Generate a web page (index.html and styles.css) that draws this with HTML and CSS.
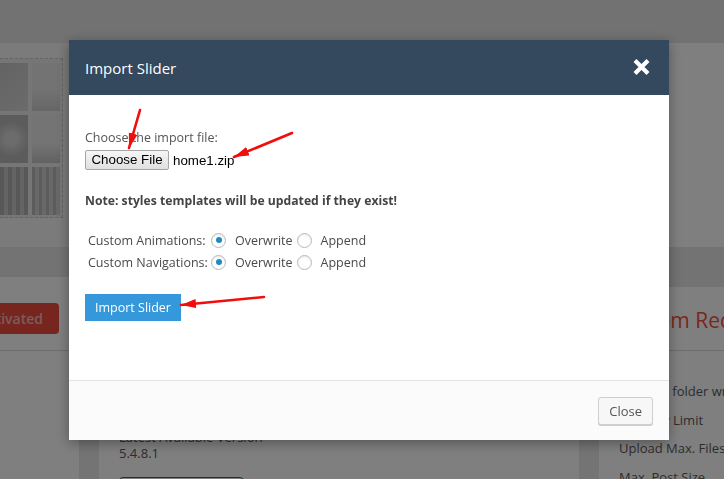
FILE: index.html
```html
<!DOCTYPE html>
<html lang="en">
<head>
    <meta charset="UTF-8">
    <meta name="viewport" content="width=device-width, initial-scale=1.0">
    <title>Import Slider</title>
    <link rel="stylesheet" href="styles.css">
</head>
<body>
    <div class="page">
        <div class="topbar"></div>
        <div class="hero">
            <div class="preview">
                <div class="preview-frame">
                    <span class="thumb thumb-a"></span>
                    <span class="thumb thumb-b"></span>
                    <span class="thumb thumb-c"></span>
                    <span class="thumb thumb-d"></span>
                    <span class="thumb thumb-e"></span>
                    <span class="thumb thumb-f"></span>
                </div>
            </div>
        </div>
        <div class="band">
            <div class="band-left">
                <div class="strip"></div>
                <div class="activation"><span class="btn-activated">Not Activated</span></div>
            </div>
            <div class="band-right">
                <div class="strip strip-tall"></div>
                <h2 class="req-title">System Requirements</h2>
            </div>
        </div>
        <div class="cards">
            <div class="gutter-space"></div>
            <div class="gutter"></div>
            <div class="card card-version">
                <p>Installed Version</p>
                <p>5.4.8</p>
                <p class="spaced">Latest Available Version</p>
                <p>5.4.8.1</p>
                <span class="btn-outline"></span>
            </div>
            <div class="gutter"></div>
            <div class="card card-reqs">
                <p>Uploads folder writable</p>
                <p>Memory Limit</p>
                <p>Upload Max. Filesize</p>
                <p>Max. Post Size</p>
            </div>
        </div>
    </div>

    <div class="backdrop"></div>

    <div class="modal">
        <div class="modal-header">
            <h3>Import Slider</h3>
            <button class="modal-close" title="Close">
                <svg width="19" height="18" viewBox="0 0 19 18">
                    <path d="M3 2.5 L16 15.5 M16 2.5 L3 15.5" stroke="#fff" stroke-width="4.2" fill="none"/>
                </svg>
            </button>
        </div>
        <div class="modal-body">
            <p class="field-label">Choose the import file:</p>
            <div class="file-field">
                <span class="file-btn">Choose File</span>
                <span class="file-name">home1.zip</span>
            </div>
            <p class="note">Note: styles templates will be updated if they exist!</p>
            <div class="options">
                <span class="opt-label">Custom Animations:</span>
                <label class="opt"><input type="radio" name="anim" checked> Overwrite</label>
                <label class="opt"><input type="radio" name="anim"> Append</label>
                <span class="opt-label">Custom Navigations:</span>
                <label class="opt"><input type="radio" name="nav" checked> Overwrite</label>
                <label class="opt"><input type="radio" name="nav"> Append</label>
            </div>
            <button class="btn-import">Import Slider</button>
        </div>
        <div class="modal-footer">
            <button class="btn-close">Close</button>
        </div>
    </div>

    <svg class="annotations" width="724" height="479" viewBox="0 0 724 479">
        <defs>
            <marker id="head" markerUnits="userSpaceOnUse" markerWidth="16" markerHeight="10" refX="15" refY="4.5" orient="auto">
                <path d="M0 0 L15 4.5 L0 9 Z" fill="#f20d0d"/>
            </marker>
        </defs>
        <line x1="140" y1="110" x2="129" y2="148" stroke="#f20d0d" stroke-width="2.6" stroke-linecap="round" marker-end="url(#head)"/>
        <line x1="292" y1="133" x2="234" y2="157" stroke="#f20d0d" stroke-width="2.6" stroke-linecap="round" marker-end="url(#head)"/>
        <line x1="264" y1="297" x2="181" y2="305" stroke="#f20d0d" stroke-width="2.6" stroke-linecap="round" marker-end="url(#head)"/>
    </svg>
</body>
</html>
```

FILE: styles.css
```css
* {
    box-sizing: border-box;
}
body {
    margin: 0;
    font-family: 'Open Sans', 'Noto Sans', sans-serif;
    font-size: 14px;
    color: #555;
    background: #fff;
    overflow: hidden;
}
p {
    margin: 0;
}

/* page behind the dialog */
.page {
    width: 724px;
    height: 479px;
    overflow: hidden;
}
.topbar {
    height: 43px;
    background: #e4e4e4;
}
.hero {
    height: 204px;
    display: flex;
}
.preview {
    width: 69px;
    padding-top: 15px;
    background: #f6f6f6;
}
.preview-frame {
    width: 63px;
    height: 160px;
    border: 1px dashed #c8c8c8;
    border-left: none;
    background: #ececec;
    display: grid;
    grid-template-columns: 1fr 1fr;
    grid-auto-rows: 48px;
    gap: 4px;
    padding: 4px 2px 4px 0;
}
.thumb {
    display: block;
    background: #d0d0d0;
}
.thumb-a { background: linear-gradient(135deg, #c6c6c6, #d8d8d8); }
.thumb-b { background: linear-gradient(180deg, #e6e6e6 55%, #cdcdcd); }
.thumb-c { background: radial-gradient(circle at 40% 50%, #d8d8d8 20%, #b8b8b8 60%); }
.thumb-d { background: linear-gradient(180deg, #e8e8e8 60%, #c4c4c4); }
.thumb-e { background: repeating-linear-gradient(90deg, #b0b0b0 0 4px, #c8c8c8 4px 8px); }
.thumb-f { background: repeating-linear-gradient(90deg, #b8b8b8 0 3px, #d0d0d0 3px 7px); }

.band {
    height: 104px;
    display: flex;
    border-bottom: 1px solid #dadada;
}
.band-left {
    width: 300px;
    flex-shrink: 0;
}
.band-right {
    flex: 1;
    min-width: 0;
    padding-left: 299px;
}
.strip {
    height: 30px;
    background: #e6e6e6;
}
.strip-tall {
    height: 40px;
    margin-left: -299px;
}
.activation {
    width: 59px;
    padding-top: 26px;
    display: flex;
    justify-content: flex-end;
}
.btn-activated {
    flex-shrink: 0;
    height: 31px;
    line-height: 31px;
    padding: 0 16px;
    border-radius: 4px;
    background: #ef4b3f;
    color: #f2bab5;
    font-weight: 600;
    font-size: 14px;
    white-space: nowrap;
}
.req-title {
    margin: 18px 0 0 20px;
    font-size: 21px;
    line-height: 30px;
    font-weight: 400;
    color: #f0503f;
    white-space: nowrap;
}

.cards {
    height: 128px;
    display: grid;
    grid-template-columns: 79px 20px 480px 20px 1fr;
    font-size: 13px;
}
.gutter {
    background: #e8e8e8;
}
.card {
    background: #fff;
    padding-left: 20px;
    white-space: nowrap;
    overflow: hidden;
    color: #5a5a5a;
}
.card-version {
    padding-top: 36px;
    line-height: 16px;
}
.card-version .spaced {
    margin-top: 10px;
}
.btn-outline {
    display: block;
    width: 125px;
    height: 30px;
    margin-top: 16px;
    border: 1px solid #1a6d96;
    border-radius: 4px;
}
.card-reqs {
    padding-top: 26px;
    line-height: 28.7px;
}

.backdrop {
    position: fixed;
    inset: 0;
    background: rgba(0, 0, 0, 0.5);
}

/* dialog */
.modal {
    position: fixed;
    top: 40px;
    left: 69px;
    width: 600px;
    height: 400px;
    background: #fff;
    display: flex;
    flex-direction: column;
    box-shadow: 0 3px 12px rgba(0, 0, 0, 0.35);
}
.modal-header {
    height: 55px;
    flex-shrink: 0;
    background: #34495e;
    display: flex;
    align-items: center;
    justify-content: space-between;
    padding: 0 18px 0 16px;
}
.modal-header h3 {
    margin: 0;
    font-size: 15px;
    font-weight: 400;
    color: #fff;
}
.modal-close {
    border: none;
    background: none;
    padding: 0;
    width: 19px;
    height: 18px;
    margin-top: -2px;
    cursor: pointer;
}
.modal-close svg {
    display: block;
}
.modal-body {
    flex: 1;
    padding: 34px 16px 0;
    font-size: 12.5px;
    color: #555;
}
.field-label {
    line-height: 18px;
}
.file-field {
    margin-top: 3px;
    height: 20px;
    display: flex;
    align-items: center;
    font-family: 'Liberation Sans', Arial, sans-serif;
    font-size: 13.33px;
    color: #000;
}
.file-btn {
    width: 84px;
    height: 20px;
    line-height: 18px;
    text-align: center;
    border: 1px solid #a6a6a6;
    border-radius: 2px;
    background: linear-gradient(#f6f6f6, #e0e0e0);
    margin-right: 4px;
}
.note {
    margin-top: 22px;
    line-height: 18px;
    font-size: 12.2px;
    font-weight: 700;
    color: #444;
}
.options {
    margin-top: 19px;
    display: grid;
    grid-template-columns: 126px auto auto;
    justify-content: start;
    grid-auto-rows: 22px;
    align-items: center;
    color: #4a4a4a;
}
.opt-label {
    padding-left: 3px;
    white-space: nowrap;
}
.opt {
    display: flex;
    align-items: center;
    gap: 9px;
    margin-right: 4px;
}
.opt input {
    appearance: none;
    margin: 0;
    width: 15px;
    height: 15px;
    border: 1px solid #b4b9be;
    border-radius: 50%;
    background: #fff;
    box-shadow: inset 0 1px 2px rgba(0, 0, 0, 0.1);
    display: grid;
    place-items: center;
}
.opt input:checked::before {
    content: "";
    width: 6px;
    height: 6px;
    border-radius: 50%;
    background: #1e8cbe;
}
.btn-import {
    margin-top: 21px;
    height: 27px;
    padding: 0 10px;
    border: none;
    background: #3498db;
    color: #fff;
    font-family: inherit;
    font-size: 12.5px;
    cursor: pointer;
}
.modal-footer {
    height: 60px;
    flex-shrink: 0;
    border-top: 1px solid #e2e2e2;
    background: #fbfbfb;
    display: flex;
    justify-content: flex-end;
    align-items: flex-start;
    padding: 16px 16px 0 0;
}
.btn-close {
    height: 28px;
    padding: 0 10px;
    border: 1px solid #cfcfcf;
    border-radius: 3px;
    background: #f7f7f7;
    box-shadow: 0 1px 0 #ccc;
    color: #555;
    font-family: inherit;
    font-size: 13px;
    cursor: pointer;
}

.annotations {
    position: fixed;
    top: 0;
    left: 0;
    pointer-events: none;
}
```
